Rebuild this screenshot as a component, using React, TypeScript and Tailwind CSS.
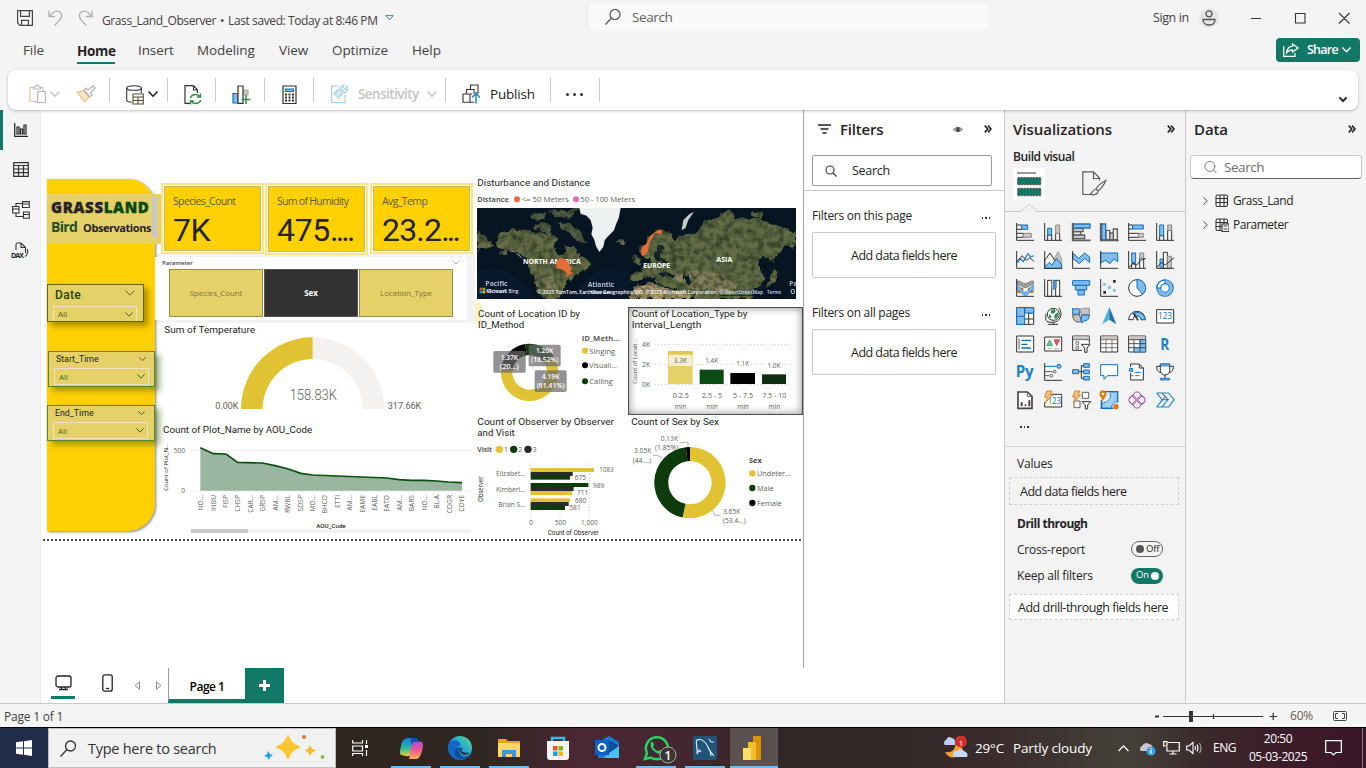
import React from "react";
import { Search } from "lucide-react";

const SANS = "font-['Open_Sans','Noto_Sans',sans-serif]";
const K = "#323130", B = "#83bdec", L = "#0f6cbd", G = "#c8c6c4", O = "#d67a1c";

type PProps = { d: string; s?: string; f?: string; w?: number };
const P = ({ d, s = K, f = "none", w = 3 }: PProps) => <path d={d} stroke={s} fill={f} strokeWidth={w} />;

const Chev = ({ className = "", w = 1.3 }: { className?: string; w?: number }) => (
  <svg className={`shrink-0 overflow-visible ${className}`} viewBox="0 0 10 6" fill="none" stroke="currentColor" strokeWidth={w}>
    <path d="M0.500 0.500L5 5.200 9.500 0.500" vectorEffect="non-scaling-stroke" />
  </svg>
);

const Collapse = () => (
  <svg className="h-[8px] w-[8px] shrink-0" viewBox="0 0 8 8" fill="none" stroke="#222" strokeWidth="1.600">
    <path d="M.8 .6L3.800 4 .8 7.400M4 .6L7 4 4 7.400" />
  </svg>
);

type TProps = {
  x: number; y: number; w?: number; size: number; c?: string; b?: boolean; a?: "start" | "middle" | "end";
  font?: string; rot?: boolean; weight?: number; children: React.ReactNode;
};
const T = ({ x, y, w, size, c = "#605e5c", b, a = "start", font = "Open Sans", rot, weight, children }: TProps) => (
  <text
    x={x} y={y} fontSize={size} fill={c} fontWeight={weight ?? (b ? 700 : 400)} textAnchor={a} fontFamily={`${font}, sans-serif`}
    textLength={w} lengthAdjust="spacingAndGlyphs" dominantBaseline="central"
    transform={rot ? `rotate(-90 ${x} ${y})` : undefined}
  >
    {children}
  </text>
);

const axis = "M2 0V52H54";

const vizIcons: React.ReactNode[] = [
  <><P d="M2 6H17V19H2M2 31H22V43H2" /><P d="M22 31H46V43H22Z" s="#8a8886" f={G} /><P d="M17 6H35V19H17Z" s={L} f={B} /><P d={axis} /></>,
  <><P d="M11 52V36H23V52M35 52V31H47V52" /><P d="M35 6H47V31H35Z" s="#8a8886" f={G} /><P d="M11 16H23V36H11Z" s={L} f={B} /><P d={axis} /></>,
  <><P d="M4 26H26V36H4Z" s="#605e5c" f="#eee" w={4} /><P d="M4 15H33V26H4Z" s="#605e5c" f={G} w={4} /><P d="M4 36H38V47H4Z" s="#605e5c" f={G} w={4} /><P d="M4 3H54V15H4Z" s="#2474b5" f={B} w={4} /><P d="M2 0V52H56" w={5} s="#605e5c" /></>,
  <><P d="M18 22H29V50H18ZM40 18H52V50H40Z" s="#605e5c" f="#eee" w={4} /><P d="M29 30H40V50H29Z" s="#605e5c" f={G} w={4} /><P d="M5 3H17V51H5Z" s="#2474b5" f={B} w={4} /><P d="M2 0V52H56" w={5} s="#605e5c" /></>,
  <><P d="M2 6H14V18H2M2 31H32V43H2" /><P d="M32 31H46V43H32Z" s="#8a8886" f={G} /><P d="M14 6H46V18H14Z" s={L} f={B} /><P d={axis} /></>,
  <><P d="M11 52V38H23V52M35 52V22H47V52" /><P d="M35 6H47V22H35Z" s="#8a8886" f={G} /><P d="M11 6H23V38H11Z" s={L} f={B} /><P d={axis} /></>,
  <><P d="M2 36L14 24 22 32 36 8 44 18 54 14" s="#2b88c8" w={4} /><P d="M2 32L18 14 32 28 42 20 54 32" /><P d={axis} /></>,
  <><P d="M26 32L42 2 53 24V52H26Z" s="#a19f9d" f={G} /><P d="M2 28L18 6 36 34 20 52H2Z" f="#f3f3f3" /><P d="M2 48L16 34 24 42 38 22 53 42V52H2Z" s={L} f={B} /><P d={axis} /></>,
  <><P d="M2 6L20 22 38 6 53 18V34L38 22 22 38 2 22Z" f={B} s={L} /><P d={axis} /></>,
  <><P d="M2 6H53V32L42 24 30 38 16 28 2 36Z" f={B} s={L} /><P d={axis} /></>,
  <><P d="M11 52V38H23V52M35 52V22H47V52" f="#fff" /><P d="M35 6H47V22H35Z" s="#8a8886" f={G} /><P d="M11 6H23V34H11Z" s={L} f={B} /><P d="M2 50L14 38 26 42 38 28 54 22" /><P d={axis} /></>,
  <><P d="M12 24H22V52H12Z" s={L} f={B} /><P d="M22 4H34V52H22Z" f="#fff" /><P d="M34 16H46V52H34Z" s="#8a8886" f={G} /><P d="M2 50L16 34 28 42 40 32 54 20" /><P d={axis} /></>,
  <><P d="M4 38H16V30H22M36 30H42V38H53" s={O} w={8} /><P d="M2 6C14 4 20 14 28 14S42 4 52 6V16C42 16 36 26 28 26S14 16 2 16Z" f="#a19f9d" s="#605e5c" w={2} /><P d="M2 20C16 20 18 40 28 40S40 20 52 20V32C42 32 40 49 28 49S14 32 2 32Z" f={B} s={L} w={2} /><P d="M2 0V52H54" /></>,
  <><P d="M11 4H23V52H11ZM35 4H47V52H35Z" f="#fff" /><P d="M23 4H29V32H23" s="#8a8886" f={G} /><P d="M30 4H36V28H30Z" s={L} f={B} /><P d={axis} /></>,
  <><P d="M2 5H53V19H2Z" s={L} f={B} /><P d="M10 19H44V33H10Z" s={L} f={B} /><P d="M18 33H37V48H18Z" s={L} f={B} /></>,
  <><P d="M39 3H47V11H39ZM10 36H18V44H10Z" s="none" f={K} /><path d="M9 12h8v8H9zM24 21h9v9h-9zM39 30h8v8h-8z" fill={B} /><P d={axis} /></>,
  <><circle cx="27" cy="27" r="25" fill="#fff" stroke={K} strokeWidth="3" /><P d="M27 2A25 25 0 0 1 44 46L27 27Z" s={L} f={B} /></>,
  <><circle cx="27" cy="27" r="19" fill="none" stroke={L} strokeWidth="15" /><circle cx="27" cy="27" r="19" fill="none" stroke={B} strokeWidth="10" /><P d="M3 27A24 24 0 0 1 27 3V14A13 13 0 0 0 14 27Z" f="#fff" s={L} /></>,
  <><P d="M2 2H53V52H2ZM26 36H53M38 36V18H53M38 36V52" f="#fff" /><P d="M2 2H26V52H2ZM2 28H26M26 2H53V18H26Z" s={L} f={B} /></>,
  <><circle cx="28" cy="22" r="18" fill="#fff" stroke={K} strokeWidth="3" /><path d="M22 8l10-2 3 8-7 6-8-2zM14 22l8 4-1 8-5-2zM34 20l9-4-1 12-7 8-5-6z" fill="#2e8b57" /><P d="M44 2C58 18 50 46 26 46S4 38 6 20M28 46V52M12 52H42" /></>,
  <><path d="M2 4C10 10 14 2 22 6V22H2Z" fill={B} stroke={L} strokeWidth="3" /><P d="M22 6C32 6 36 2 52 4V24L28 22Z" s="#8a8886" f={G} /><P d="M2 24L22 22 28 42 18 46C8 44 2 36 2 24Z" s="#605e5c" f={G} /><P d="M28 24H52C52 38 44 42 36 42L28 48Z" s={L} f={B} /></>,
  <><path d="M28 0L6 52 28 38Z" fill="#4fb3e0" /><path d="M28 0L49 52 28 38Z" fill="#1f6fae" /></>,
  <><P d="M2 38A25 25 0 0 1 52 38H39A12 12 0 0 0 15 38Z" f="#fff" /><P d="M14 20A25 25 0 0 1 52 38H39A12 12 0 0 0 22 28Z" s={L} f={B} /><P d="M30 40L18 20" w={5} /></>,
  <><P d="M2 8H53V48H2Z" f="#fff" /><T x={27} y={28} size={26} w={42} a="middle" c={L}>123</T></>,
  <><P d="M2 3H53V51H2Z" f="#fff" /><P d="M9 10V44" s="#605e5c" /><P d="M16 16H45M16 28H34M16 39H45" s={L} w={4} /></>,
  <><P d="M2 6H53V48H2Z" f="#fff" /><P d="M8 32L17 14 26 32Z" f="#6cc08b" s="#2e8b57" w={2} /><P d="M30 14H47L38 32Z" f="#e8505f" s="#c43b46" w={2} /><P d="M10 41H24M30 41H46" s="#8a8886" w={2} /></>,
  <><P d="M52 26V3H2V46H30" f="#fff" /><path d="M3 4h49v10H3z" fill={G} /><P d="M2 14H52M12 20H20V28H12ZM12 34H20V42H12Z" w={2} /><P d="M28 28H54L45 39V52H38V39Z" f="#fff" /></>,
  <><P d="M2 3H53V51H2Z" f="#fff" /><path d="M3 4h49v9H3z" fill={G} /><P d="M2 14H53M2 26H53M2 38H53M18 14V51M36 14V51" w={2.5} s="#605e5c" /></>,
  <><P d="M2 3H53V51H2Z" f="#fff" /><path d="M3 4h49v9H3z" fill={G} /><path d="M36 14h16v37H20V38h16z" fill={B} /><P d="M2 14H53M2 26H53M2 38H53M18 14V51M36 14V51" w={2.5} /><P d="M36 14H53V51H18V38H36Z" w={2} s={L} /></>,
  <T x={26} y={27} size={47} a="middle" b c="#2080c4" w={27}>R</T>,
  <T x={26} y={24} size={47} a="middle" b c="#2080c4" w={54}>Py</T>,
  <><P d="M2 10H40" s={L} /><circle cx="45" cy="10" r="6" fill={B} stroke={L} strokeWidth="3" /><P d="M2 26H26M2 38H16" s="#605e5c" /><circle cx="32" cy="26" r="4" fill="none" stroke="#605e5c" strokeWidth="3" /><circle cx="22" cy="38" r="4" fill="none" stroke="#605e5c" strokeWidth="3" /><P d={axis} /></>,
  <><P d="M18 26H36M28 8V46H36M28 8H36" /><P d="M2 20H20V32H2ZM35 2H52V13H35ZM35 21H52V32H35ZM35 40H52V51H35Z" s={L} f={B} /></>,
  <P d="M2 5H53V38H22L12 49V38H2Z" s={L} f="#fff" />,
  <><P d="M8 12V3H34L46 15V51H8V30M34 3V15H46" f="#fff" /><P d="M5 16H14V25H5Z" s={L} f={B} /><P d="M20 28H38M10 38H16M22 38H34" s={L} /></>,
  <><P d="M13 10H2C2 24 8 28 16 29M41 10H52C52 24 46 28 38 29M27 36V46" /><P d="M13 3H41V22C41 30 35 36 27 36S13 30 13 22Z" f="#fff" /><P d="M13 3H41V9H13ZM13 46H41V51H13Z" s={L} f={B} w={2.5} /></>,
  <><P d="M6 3H34L48 16V52H6Z" w={5} f="#fff" s="#484644" /><P d="M34 3V16H48" s="#605e5c" /><path d="M14 34h6v12h-6zM26 40h5v6h-5zM37 28h6v18h-6z" fill="#484644" /></>,
  <><P d="M22 10H53V48H2V34" f="#fff" /><T x={31} y={29} size={25} w={40} a="middle" c={L}>123</T><P d="M8 0H24L18 12H26L4 36 10 18H2Z" s={O} f="#f3c27a" w={2.5} /></>,
  <><P d="M31 4H50V22H31ZM6 30H24V50H6Z" f="#fff" s="#605e5c" /><P d="M30 32H56L47 42V54H40V42Z" f="#fff" /><P d="M8 0H24L18 12H26L4 36 10 18H2Z" s={O} f="#f3c27a" w={2.5} /></>,
  <><P d="M4 2H53V34M40 52H4V26" f="#d7ebfa" s={L} w={4} /><P d="M52 3H34C26 8 36 18 28 24S22 34 6 36V51H36C32 44 44 30 52 34Z" f="#9fd0f2" s={L} w={2.5} /><path d="M9-2C0-2-3 7-1 13c2 6 6 8 10 18 4-10 8-12 10-18C21 7 18-2 9-2" fill={O} /><circle cx="9" cy="9" r="4" fill="#fff" /><circle cx="48" cy="47" r="8" fill={O} /></>,
  <P d="M22 3H32L39 12 27 25 15 12ZM3 22V32L12 39 25 27 12 15ZM51 22V32L42 39 29 27 42 15ZM22 51H32L39 42 27 29 15 42ZM15 12L3 22M39 12L51 22M15 42L3 32M39 42L51 32" s="#9b4fb0" w={3} />,
  <><P d="M2 6H38L54 26 38 48H18L36 26 18 26M2 6L18 26M18 6L36 26M2 48L18 28M2 48H20" s="#1f86d6" f="none" w={3.5} /><P d="M10 38L28 16" s="#1f86d6" /></>,
];

const donut = (cx: number, cy: number, R: number, r: number, a0: number, a1: number) => {
  const p = (rad: number, a: number) => {
    const t = ((a - 90) * Math.PI) / 180;
    return `${(cx + rad * Math.cos(t)).toFixed(1)} ${(cy + rad * Math.sin(t)).toFixed(1)}`;
  };
  const big = a1 - a0 > 180 ? 1 : 0;
  return `M${p(R, a0)}A${R} ${R} 0 ${big} 1 ${p(R, a1)}L${p(r, a1)}A${r} ${r} 0 ${big} 0 ${p(r, a0)}Z`;
};

const GOLD = "#e1c233", GREEN = "#0d3b0b";
const DIN = "Roboto";
const INK = "#252423";

function MapVisual() {
  return (
    <>
      <svg className="absolute left-[434px] top-[65px] h-[32px] w-[320px]" viewBox="15 0 960 96">
        <T x={22} y={23} size={29} w={338} font={DIN} c={INK}>Disturbance and Distance</T>
        <T x={22} y={73} size={21} w={94} b>Distance</T>
        <circle cx="141" cy="73" r="9" fill="#e66c37" /><T x={155} y={73} size={21} w={142}>{"<= 50 Meters"}</T>
        <circle cx="318" cy="73" r="9" fill="#e668b6" /><T x={331} y={73} size={21} w={164}>50 - 100 Meters</T>
      </svg>
      <svg className="absolute left-[436px] top-[98px] h-[91px] w-[319px]" viewBox="21 99 957 273" preserveAspectRatio="none">
        <defs>
          <filter id="terrain" x="0" y="0" width="100%" height="100%" colorInterpolationFilters="sRGB">
            <feTurbulence type="fractalNoise" baseFrequency="0.05" numOctaves="4" seed="5" result="n" />
            <feDisplacementMap in="SourceGraphic" in2="n" scale="22" xChannelSelector="R" yChannelSelector="G" result="s" />
            <feColorMatrix in="n" type="matrix" values="0 0 0 0 0.16  0 0 0 0 0.21  0 0 0 0 0.13  0 2 0 0 -0.75" result="m" />
            <feComposite in="m" in2="s" operator="in" result="o" />
            <feMerge><feMergeNode in="s" /><feMergeNode in="o" /></feMerge>
          </filter>
        </defs>
        <rect x="21" y="99" width="957" height="273" fill="#061521" />
        <path d="M21 290C120 260 170 330 200 372H21ZM300 372C360 280 420 260 480 300L490 372Z" fill="#08192c" />
        <g filter="url(#terrain)">
          <path d="M21 170L50 190 70 212 50 222 30 215 21 230ZM82 185L100 168 130 162 165 166 205 178 235 172 262 190 252 212 266 238 285 240 286 212 312 214 325 235 345 250 362 268 345 288 312 300 292 318 280 345 270 372H215L198 335 186 296 172 262 150 238 120 226 88 244 100 224 80 206Z" fill="#656c46" />
          <path d="M180 120L215 112 232 128 200 138ZM190 150L222 142 250 160 232 172 205 168ZM235 112L275 102 300 110 290 130 258 128ZM262 140L300 145 335 175 345 205 325 200 300 175 270 160ZM310 99H330L300 125 285 122Z" fill="#525c46" />
          <path d="M438 198L462 196 466 206 448 212Z" fill="#7c7c65" />
          <path d="M513 242L515 218 536 188 562 166 604 178 612 196 650 178 682 172 700 140 736 130 775 103 795 132 850 128 920 150 978 172V215L942 214 925 238 905 262 880 240 862 262 880 290 878 325 850 345 845 372H640L620 340 560 325 545 305 520 312 482 318 480 298 512 290 520 272 545 264 540 244 526 250ZM494 240L508 250 510 268 492 268ZM845 110L880 118 870 132 848 124ZM905 300L912 280 922 296 912 325 890 338Z" fill="#616c46" />
          <path d="M476 372L494 338 540 322 600 342 640 348 690 372Z" fill="#b39a70" />
          <path d="M600 300L690 282 760 300 800 330 790 355 700 350 640 330ZM215 310L250 300 260 345 240 360Z" fill="#958c66" opacity=".75" />
          <path d="M550 235L575 208 585 215 570 246 600 262 560 260Z M560 290L620 296 610 306 572 304ZM640 300L656 298 664 330 650 330Z" fill="#08192a" />
        </g>
        <path d="M328 99H452L446 130 438 148 432 166 412 186 404 196 400 215 388 231 378 214 373 194 364 178 368 158 362 136 350 122 332 116Z" fill="#edf0f0" />
        <path d="M110 226L135 232 160 254 148 240 130 228ZM635 165L640 135 658 118 672 110 655 135 646 160Z" fill="#c6cdca" />
        <path d="M513 240L515 218 530 205 540 182 565 165 577 166 574 178 556 174 546 190 538 205 533 230 522 242Z" fill="#e66c37" />
        <T x={159} y={260} size={21} w={173} b c="#fff">NORTH AMERICA</T>
        <T x={520} y={270} size={20} w={80} b c="#fff">EUROPE</T>
        <T x={739} y={253} size={20} w={48} b c="#fff">ASIA</T>
        <path d="M258 262L272 249 290 254 297 268 304 277 302 290 311 294 298 300 288 306 290 294 278 284 260 280Z" fill="#e66c37" />
        <g opacity=".85">
          <T x={46} y={326} size={19} w={67} b c="#cbd6e6">Pacific</T>
          <T x={50} y={349} size={18} w={60} b c="#cbd6e6">Ocean</T>
          <T x={353} y={329} size={19} w={80} b c="#cbd6e6">Atlantic</T>
          <T x={362} y={351} size={18} w={60} b c="#cbd6e6">Ocean</T>
          <T x={958} y={326} size={19} b c="#cbd6e6">Pa</T>
          <T x={961} y={348} size={19} b c="#cbd6e6">O</T>
        </g>
        <path d="M29 338h8v8h-8z" fill="#f25022" /><path d="M38 338h8v8h-8z" fill="#7fba00" /><path d="M29 347h8v8h-8z" fill="#00a4ef" /><path d="M38 347h8v8h-8z" fill="#ffb900" />
        <T x={49} y={348} size={16} w={96} c="#fff">Microsoft Bing</T>
        <T x={202} y={351} size={15} w={542} weight={600} c="#fff">© 2025 TomTom, Earthstar Geographics SIO, © 2025 Microsoft Corporation,</T>
        <g textDecoration="underline"><T x={748} y={351} size={15} w={131} weight={600} c="#c5dcff">© OpenStreetMap</T><T x={891} y={351} size={15} w={42} weight={600} c="#c5dcff">Terms</T></g>
      </svg>
    </>
  );
}

function MethodDonut() {
  return (
    <svg className="absolute left-[434px] top-[194px] h-[112px] w-[150px]" viewBox="15 12 450 336">
      <T x={24} y={39} size={29} w={306} font={DIN} c={INK}>Count of Location ID by</T>
      <T x={24} y={72} size={29} w={139} font={DIN} c={INK}>ID_Method</T>
      <path d={donut(179, 217, 86, 52, -9, 58)} fill={GREEN} />
      <path d={donut(179, 217, 86, 52, 58, 279)} fill={GOLD} />
      <path d={donut(179, 217, 86, 52, 279, 351)} fill="#0b0b0b" />
      {[[70, 153, 97], [176, 134, 96], [194, 211, 96]].map(([x, y, w]) => (
        <rect key={x} x={x} y={y} width={w} height="65" rx="5" fill="#6a6a6a" fillOpacity=".72" />
      ))}
      <T x={118} y={173} size={20} w={52} a="middle" weight={600} c="#fff">1.37K</T><T x={118} y={200} size={20} w={57} a="middle" weight={600} c="#fff">(20...)</T>
      <T x={224} y={152} size={20} w={52} a="middle" weight={600} c="#fff">1.26K</T><T x={224} y={179} size={20} w={82} a="middle" weight={600} c="#fff">(18.52%)</T>
      <T x={242} y={230} size={20} w={53} a="middle" weight={600} c="#fff">4.19K</T><T x={242} y={257} size={20} w={84} a="middle" weight={600} c="#fff">(61.41%)</T>
      <T x={335} y={114} size={22} w={115} b>ID_Meth...</T>
      {[["Singing", 152, GOLD, 78], ["Visuali...", 196, "#000", 83], ["Calling", 244, GREEN, 70]].map(([n, y, c, w]) => (
        <g key={n as string}><circle cx="345" cy={y} r="9" fill={c as string} /><T x={358} y={y as number} size={23} w={w as number}>{n}</T></g>
      ))}
    </svg>
  );
}

function IntervalBars() {
  const bars: [number, number, number, string, string, string, number][] = [
    [594, 153, 74, "#e6d068", "3.3K", "0-2.5", 181], [689, 209, 72, "#0b4a12", "1.4K", "2.5 - 5", 181],
    [781, 219, 74, "#000", "1.1K", "5 - 7.5", 190], [876, 223, 72, "#0b2f10", "1.0K", "7.5 - 10", 197],
  ];
  return (
    <div className="absolute left-[587px] top-[197px] h-[108px] w-[175px] border border-[#4b4b4b] bg-white shadow-[inset_0_0_9px_rgba(0,0,0,0.45)]">
      <svg className="h-[106px] w-[173px]" viewBox="477 24 519 318">
        <T x={485} y={40} size={29} w={347} font={DIN} c={INK}>Count of Location_Type by</T>
        <T x={485} y={73} size={29} w={209} font={DIN} c={INK}>Interval_Length</T>
        <path d="M555 133H968M555 193H968M555 253H968" stroke="#ccc" strokeWidth="3" strokeDasharray="3 6" />
        <T x={541} y={133} size={21} a="end">4K</T><T x={541} y={193} size={21} a="end">2K</T><T x={541} y={254} size={21} a="end">0K</T>
        <T x={495} y={184} size={18} w={134} a="middle" rot c="#484644">Count of Locati...</T>
        {bars.map(([x, y, w, c, v, n, ly]) => (
          <g key={n}>
            <rect x={x} y={y} width={w} height={252 - y} fill={c} />
            {v === "3.3K"
              ? <><rect x={x} y={y} width={w} height="11" fill="#e1c94a" /><rect x={x + 2} y="164" width={w - 4} height="34" rx="4" fill="#f5efcf" /></>
              : <rect x={x + w / 2 - 24} y={ly - 12} width="48" height="24" fill="#fff" />}
            <T x={x + w / 2} y={ly} size={20} w={39} a="middle">{v}</T>
            <T x={x + w / 2 + 1} y={287} size={20} w={[48, 60, 60, 71][bars.findIndex((r) => r[5] === n)]} a="middle">{n}</T>
            <T x={x + w / 2 + 1} y={318} size={20} w={35} a="middle">min</T>
          </g>
        ))}
      </svg>
    </div>
  );
}

function ObserverBars() {
  const D = "#2b2b2b";
  const rows: [number, number, string][] = [
    [504, 372, GOLD], [516, 308, D], [527, 300, GREEN], [549, 355, GREEN], [561, 311, D], [573, 306, GOLD],
    [595, 300, GOLD], [606, 296, D], [618, 285, GREEN],
  ];
  return (
    <svg className="absolute left-[434px] top-[306px] h-[122px] w-[150px]" viewBox="15 348 450 366">
      <T x={22} y={364} size={29} w={410} font={DIN} c={INK}>Count of Observer by Observer</T>
      <T x={22} y={397} size={29} w={112} font={DIN} c={INK}>and Visit</T>
      <T x={22} y={449} size={20} w={44} b>Visit</T>
      {[[88, GOLD, 1], [131, GREEN, 2], [174, D, 3]].map(([x, c, n]) => (
        <g key={n}><circle cx={x} cy="448" r="11" fill={c as string} /><T x={(x as number) + 14} y={449} size={20}>{n}</T></g>
      ))}
      <path d="M182 486V650M270 486V650M358 486V650" stroke="#ccc" strokeWidth="3" strokeDasharray="3 6" />
      {rows.map(([y, x, c]) => <rect key={y} x="182" y={y} width={x - 182} height="12" fill={c} />)}
      <T x={166} y={521} size={20} w={88} a="end">Elizabet...</T><T x={166} y={569} size={20} w={88} a="end">Kimberl...</T><T x={166} y={614} size={20} w={81} a="end">Brian S...</T>
      <T x={388} y={508} size={21} w={43}>1083</T><T x={314} y={532} size={21} w={34}>675</T><T x={369} y={556} size={21} w={34}>989</T>
      <T x={321} y={577} size={21} w={34}>711</T><T x={315} y={602} size={21} w={34}>680</T><T x={298} y={623} size={21} w={34}>581</T>
      <T x={183} y={668} size={21} a="middle">0</T><T x={271} y={668} size={21} w={34} a="middle">500</T><T x={358} y={668} size={21} w={50} a="middle">1,000</T>
      <T x={233} y={699} size={19} w={153} font={DIN} c="#252423">Count of Observer</T>
      <T x={30} y={567} size={19} w={76} a="middle" rot c="#252423">Observer</T>
    </svg>
  );
}

function SexDonut() {
  return (
    <svg className="absolute left-[587px] top-[306px] h-[122px] w-[175px]" viewBox="474 348 525 366">
      <T x={484} y={364} size={29} w={263} font={DIN} c={INK}>Count of Sex by Sex</T>
      <path d="M630 427H654V440M549 466H562L578 474M727 632L735 646H752" stroke="#b3b0ad" strokeWidth="3" fill="none" />
      <path d={donut(660, 548, 107, 65, 0, 192)} fill={GOLD} />
      <path d={donut(660, 548, 107, 65, 192, 353.3)} fill={GREEN} />
      <path d={donut(660, 548, 107, 65, 353.3, 360)} fill="#000" />
      <T x={598} y={416} size={21} w={52} a="middle">0.13K</T><T x={590} y={442} size={21} w={70} a="middle">(1.85%)</T>
      <T x={518} y={452} size={21} w={52} a="middle">3.05K</T><T x={516} y={482} size={21} w={56} a="middle">(44....)</T>
      <T x={785} y={635} size={21} w={52} a="middle">3.65K</T><T x={793} y={662} size={21} w={68} a="middle">(53.4...)</T>
      <T x={837} y={481} size={21} w={38} b c="#484644">Sex</T>
      {[["Undeter...", 520, GOLD, 101], ["Male", 564, GREEN, 50], ["Female", 609, "#000", 75]].map(([n, y, c, w]) => (
        <g key={n as string}><circle cx="847" cy={y} r="9.5" fill={c as string} /><T x={861} y={y as number} size={22} w={w as number}>{n}</T></g>
      ))}
    </svg>
  );
}

function Gauge() {
  return (
    <svg className="absolute left-[119px] top-[213px] h-[92px] w-[310px]" viewBox="480 9 930 276">
      <T x={493} y={29} size={29} w={272} font={DIN} c={INK}>Sum of Temperature</T>
      <path d={donut(938, 267, 215, 150, 0, 90)} fill="#f3f2f1" /><path d={donut(938, 267, 215, 150, -90, 0)} fill={GOLD} />
      <T x={869} y={224} size={46} w={142} font={DIN} weight={300} c="#605e5c">158.83K</T>
      <T x={646} y={257} size={27} w={69} font={DIN}>0.00K</T><T x={1163} y={257} size={27} w={101} font={DIN}>317.66K</T>
    </svg>
  );
}

const codes = ["NO...", "INBU", "FISP", "CHSP", "CAR...", "GRSP", "AM...", "RWBL", "SOSP", "MO...", "BHCO", "ETTI", "AM...", "EAME", "EABL", "EATO", "AM...", "BARS", "NO...", "BL.A", "COGR", "COYE"];

function AreaChart() {
  const line = "M601 383L640 401 678 402 713 427 787 429 825 437 865 447 903 460 938 465 1012 468 1085 471 1160 474 1197 479 1235 481 1272 481 1310 483 1345 486 1386 488";
  return (
    <svg className="absolute left-[119px] top-[312px] h-[114px] w-[312px]" viewBox="480 306 936 342">
      <T x={489} y={329} size={29} w={448} font={DIN} c={INK}>Count of Plot_Name by AOU_Code</T>
      <path d="M573 391H1413M573 513H1413" stroke="#eeeeee" strokeWidth="3" />
      <T x={555} y={392} size={20} w={34} a="end">500</T><T x={555} y={512} size={20} a="end">0</T>
      <T x={498} y={441} size={18} w={143} a="middle" rot c="#252423">Count of Plot_N...</T>
      <path d={`${line}V512H601Z`} fill="#9bb6a0" /><path d={line} fill="none" stroke="#09500f" strokeWidth="5" />
      {codes.map((c, i) => <T key={i} x={602 + i * 37.25} y={525} size={20} a="end" rot>{c}</T>)}
      <T x={993} y={615} size={18} w={88} a="middle" font={DIN} weight={500} c="#252423">AOU_Code</T>
      <rect x="573" y="627" width="840" height="12" fill="#f3f3f3" /><rect x="573" y="627" width="171" height="12" fill="#c8c8c8" />
    </svg>
  );
}

function Slicer({ title, className, titleClass, boxClass, chevClass }: { title: string; className: string; titleClass: string; boxClass: string; chevClass: string }) {
  return (
    <div className={`absolute flex flex-col bg-[#e6d068] ${className}`}>
      <div className={`flex items-center justify-between font-['Roboto'] ${titleClass}`}>
        <span>{title}</span><Chev className={`text-[#4e6231] ${chevClass}`} w={1} />
      </div>
      <div className={`flex items-center justify-between border border-[#eae3c4] pl-[4px] text-[8px] text-[#3e6a26] ${boxClass}`}>
        <span>All</span><Chev className="mr-[3px] w-[8px]" w={1} />
      </div>
    </div>
  );
}

function Card({ label, value, dots = "", className, labelClass, valueClass }: { label: string; value: string; dots?: string; className: string; labelClass: string; valueClass: string }) {
  return (
    <div className={`absolute top-[73px] border-2 border-[#ffe680] bg-white p-px ${className}`}>
      <div className="flex h-full flex-col overflow-hidden border border-[#cdb867] bg-[#ffd103] pl-[8px] whitespace-nowrap">
        <div className={`mt-[7px] text-[10.5px] leading-[15px] text-[#605e3c] ${labelClass}`}>{label}</div>
        <div className={`mt-[3px] font-['Roboto'] text-[32px] leading-[36px] text-[#252423] ${valueClass}`}>{value}<span className="tracking-[-2.800px]">{dots}</span></div>
      </div>
    </div>
  );
}

function ReportCanvas() {
  return (
    <div className="relative h-[558px] w-[762px] shrink-0 overflow-hidden bg-white">
      <div className="absolute left-[114px] top-[144px] h-[69px] w-[320px] bg-[#f3f3f3]" />
      <div className="absolute left-[434px] top-[192px] h-[22px] w-[6px] bg-[#fff3c2]" />
      <div className="absolute left-[6px] top-[69px] h-[352px] w-[108px] rounded-r-[27px] bg-[#ffd103] shadow-[1px_1px_3px_rgba(0,0,0,0.5)]" />
      <div className="absolute left-[6px] top-[84px] flex h-[50px] w-[114px] bg-[#e6d068]">
        <div className="flex w-[105px] flex-col pl-[4px] pt-[3px] font-bold whitespace-nowrap text-[#252423]">
          <div className="text-[15px] leading-[20px] font-extrabold tracking-[0.650px] [-webkit-text-stroke:0.4px_currentColor]">GRASS<span className="text-[#07490f]">LAND</span></div>
          <div className="flex items-baseline gap-[6px] leading-[20px]"><span className="text-[14px] tracking-[-0.700px] text-[#1d4f2b]">Bird</span><span className="text-[11px] tracking-[-0.450px]">Observations</span></div>
        </div>
        <div className="mt-[3px] h-[40px] w-[5px] bg-[#c8c8c8]" />
      </div>
      <Card label="Species_Count" value="7K" className="left-[120px] h-[71px] w-[103px]" labelClass="tracking-[-0.650px]" valueClass="tracking-[-0.500px]" />
      <Card label="Sum of Humidity" value="475" dots="...." className="left-[224px] h-[72px] w-[103px]" labelClass="tracking-[-0.700px]" valueClass="tracking-[-0.300px]" />
      <Card label="Avg_Temp" value="23.2" dots="..." className="left-[329px] h-[71px] w-[103px]" labelClass="tracking-[-0.600px]" valueClass="tracking-[-0.800px]" />
      <div className="absolute left-[114px] top-[147px] h-[63px] w-[312px] bg-white">
        <div className="flex h-[12px] items-center justify-between pl-[7px] pr-[8px] text-[6px] font-semibold text-[#444]"><span>Parameter</span><Chev className="w-[6px] text-[#999]" w={0.9} /></div>
        <div className="ml-[14px] grid h-[48px] w-[284px] grid-cols-3 gap-px text-[8px] tracking-[-0.100px] text-[#7d7447]">
          <div className="flex items-center justify-center border border-[#9a8c4b] bg-[#e6d068]">Species_Count</div>
          <div className="flex items-center justify-center border border-[#555] bg-[#323232] font-bold text-white">Sex</div>
          <div className="flex items-center justify-center border border-[#9a8c4b] bg-[#e6d068]">Location_Type</div>
        </div>
      </div>
      <Slicer title="Date" className="left-[6px] top-[174px] h-[38px] w-[97px] border border-[#6b601f] pl-[5px] pr-[6px] shadow-[4px_4px_6px_rgba(110,95,0,0.6)]" chevClass="w-[10px] -mt-[3px] mr-[2px]" titleClass="h-[20px] pl-[2px] text-[12px] font-medium tracking-[0.300px] text-[#1b4a10]" boxClass="mt-[2px] h-[15px] w-[84px] border-b-0" />
      <Slicer title="Start_Time" className="left-[7px] top-[241px] h-[36px] w-[107px] border border-[#5f8426] pl-[5px] pr-[5px] shadow-[5px_4px_6px_rgba(70,100,20,0.5)]" chevClass="w-[7px] mr-[2px]" titleClass="h-[15px] pl-[2px] pr-px text-[8.8px] text-[#252423]" boxClass="mt-px h-[17px] w-[95px]" />
      <Slicer title="End_Time" className="left-[6px] top-[295px] h-[36px] w-[108px] border border-[#5f8426] pl-[5px] pr-[6px] shadow-[5px_4px_6px_rgba(70,100,20,0.5)]" chevClass="w-[7px] mr-[2px]" titleClass="h-[15px] pl-[2px] pr-px text-[8.8px] text-[#252423]" boxClass="mt-px h-[17px] w-[95px]" />
      <MapVisual /><Gauge /><AreaChart /><MethodDonut /><IntervalBars /><ObserverBars /><SexDonut />
      <svg className="absolute left-[2px] top-[429px] h-[2px] w-[760px]"><path d="M0 1H760" stroke="#484644" strokeWidth="2" strokeDasharray="2 2" /></svg>
    </div>
  );
}

function TitleBar() {
  return (
    <div className="flex h-[35px] items-center whitespace-nowrap text-[#424242]">
      <svg className="ml-[17px] h-[16px] w-[16px] shrink-0" viewBox="0 0 16 16" fill="none" stroke="#444" strokeWidth="1.200"><path d="M.6.6H15.4V15.4H3L.6 13ZM3.6.6V6.4H12.4V.6M4.6 15.4V10.4H11.4V15.4" /></svg>
      <svg className="ml-[15px] h-[16px] w-[15px] shrink-0" viewBox="0 0 15 16" fill="none" stroke="#b0b0b0" strokeWidth="1.300"><path d="M1 .5V6.5H7M1 6.5L5 2.5C8 0 13 1 13.6 5C14 8 12 10 6.5 15.5" /></svg>
      <svg className="ml-[15px] h-[16px] w-[15px] shrink-0" viewBox="0 0 15 16" fill="none" stroke="#b0b0b0" strokeWidth="1.300"><path d="M14 .5V6.5H8M14 6.5L10 2.5C7 0 2 1 1.400 5C1 8 3 10 8.500 15.500" /></svg>
      <div className="ml-[9px] mt-[7px] flex w-[276px] shrink-0 gap-[4px] text-[12px] tracking-[-0.400px]"><span>Grass_Land_Observer</span><span>•</span><span>Last saved: Today at 8:46 PM</span></div>
      <svg className="ml-[7px] h-[6px] w-[9px] shrink-0" viewBox="0 0 9 6" fill="none" stroke="#4c7f9b"><path d="M.8.6H8.2L4.5 5Z" /></svg>
      <div className="ml-[193px] -mt-[1px] flex h-[26px] w-[401px] shrink-0 items-center rounded border-l border-[#e6e6e6] bg-[#fafafa] pl-[17px] text-[13.500px] tracking-[-0.400px] text-[#616161]">
        <svg className="mr-[11px] h-[16px] w-[16px]" viewBox="0 0 16 16" fill="none" stroke="#555" strokeWidth="1.200"><circle cx="10" cy="5.500" r="5" /><path d="M6.400 9L.5 15.500" /></svg>Search
      </div>
      <div className="ml-[165px] w-[46px] shrink-0 pt-px text-[12.500px] tracking-[-0.400px]">Sign in</div>
      <div className="flex h-[20px] w-[20px] shrink-0 items-center justify-center rounded-full bg-[#e5e5e5]"><svg className="h-[16px] w-[14px]" viewBox="0 0 14 16" fill="none" stroke="#555" strokeWidth="1.300"><circle cx="7" cy="3.800" r="3" /><path d="M1 9.500H13C13 13 10.500 15 7 15S1 13 1 9.500Z" /></svg></div>
      <svg className="ml-[32px] h-[12px] w-[100px] shrink-0" viewBox="0 0 100 12" fill="none" stroke="#333" strokeWidth="1.100"><path d="M0 6.500H10M44.500 1.500H54V11H44.500ZM88 1L98.500 11.500M98.500 1L88 11.500" /></svg>
    </div>
  );
}

function Menu() {
  return (
    <div className="flex h-[35px] items-center whitespace-nowrap text-[13.500px] tracking-[-0.100px] text-[#424242]">
      <div className="ml-[23px] w-[54px] -mt-[5px]">File</div>
      <div className="mr-[23px] -mt-[3px] h-[26px] w-[38px] border-b-[2px] border-[#117865] pt-[3px] text-center font-bold tracking-[-0.300px] text-[#242424]">Home</div>
      <div className="w-[59px] -mt-[5px]">Insert</div><div className="w-[82px] -mt-[5px]">Modeling</div><div className="w-[53px] -mt-[5px]">View</div>
      <div className="w-[80px] -mt-[5px]">Optimize</div><div className="w-[40px] -mt-[5px]">Help</div>
      <div className="ml-auto mr-[6px] -mt-[5px] flex h-[24px] w-[84px] items-center rounded bg-[#117865] pl-[7px] text-[12.500px] font-semibold tracking-[-0.750px] text-white">
        <svg className="mr-[8px] h-[14px] w-[16px] shrink-0" viewBox="0 0 16 14" fill="none" stroke="#fff" strokeWidth="1.200"><path d="M.7 3V13.300H12V10M9.500 1L15.200 5 9.500 9V6.800C6.500 6.800 5 8 3.500 10C4 6 6 3.400 9.500 3.200Z" /></svg>
        <span className="w-[32px] pt-px">Share</span><Chev className="ml-[3px] w-[9px]" w={1.400} />
      </div>
    </div>
  );
}

const Sep = ({ className }: { className: string }) => <div className={`h-[24px] w-px shrink-0 bg-[#c8c8c8] -mt-[8px] ${className}`} />;

function Ribbon() {
  return (
    <div className="relative z-10 mx-[8px] flex h-[40px] shrink-0 items-center rounded-lg bg-white shadow-[0_1px_3px_rgba(0,0,0,0.25)]">
      <div className="mt-[8px] flex h-[24px] flex-1 items-center">
        <svg className="ml-[21px] h-[20px] w-[17px] shrink-0" viewBox="0 0 17 20" fill="none" strokeWidth="1.100"><path d="M5 3.500H1V17.500H8M11 3.500H14V7" stroke="#edc08e" /><path d="M4.500 5H11.500V3H9.500C9.500 .5 6.500 .5 6.500 3H4.500ZM8.700 7.500H16.400V18.500H8.700Z" stroke="#b5b5b5" fill="#fff" /></svg>
        <Chev className="ml-[4px] w-[10px] text-[#c3c3c3]" />
        <svg className="ml-[16px] h-[18px] w-[20px] shrink-0" viewBox="0 0 20 18" fill="none" strokeWidth="1.200"><path d="M1 7L8 6 13 12 9 17Z" fill="#fbe3c5" stroke="#edc08e" /><path d="M8 5L10 3 12 5 17 .8 19 3 14.500 8 16 10 14 12Z" stroke="#b5b5b5" fill="#fff" /></svg>
        <Sep className="ml-[13px]" />
        <svg className="ml-[16px] mt-px h-[20px] w-[18px] shrink-0" viewBox="0 0 18 20" fill="none" stroke="#333" strokeWidth="1.100"><ellipse cx="8" cy="3" rx="7.300" ry="2.300" /><path d="M.7 3V15C.7 16.500 3 17.200 6 17.300M15.300 3V8" /><path d="M7 9H17.300V19H7ZM7 12H17.300M12 12V19M7 15.500H17.300" fill="#fff" stroke="#555036" /></svg>
        <Chev className="ml-[4px] w-[10px] text-[#222]" w={1.600} /><Sep className="ml-[9px]" />
        <svg className="ml-[16px] mt-px h-[20px] w-[18px] shrink-0" viewBox="0 0 18 20" fill="none" strokeWidth="1.200"><path d="M6 18.300H1V.7H9.500L13.500 5V8M9.500 .7V5H13.500" stroke="#333" /><path d="M6.500 13C8 8.500 14 8.500 16 12M16.500 8.500V12H13M16.800 15C15 19.500 9 19.500 7.200 16M6.500 19.500V16H10" stroke="#2f8f46" strokeWidth="1.400" /></svg>
        <Sep className="ml-[13px]" />
        <svg className="ml-[16px] mt-px h-[20px] w-[19px] shrink-0" viewBox="0 0 19 20" fill="none" strokeWidth="1.200"><path d="M1 8.500H6V18H1Z" fill={B} stroke={L} /><path d="M11 5H16V10H11Z" fill={G} stroke="#aaa" /><path d="M6 1H11V18.300H6Z" fill="#fff" stroke="#333" /><path d="M14 10V19M9.500 14.500H18.500" stroke="#2f8f46" strokeWidth="1.500" /></svg>
        <Sep className="ml-[13px]" />
        <svg className="ml-[17px] mt-px h-[20px] w-[15px] shrink-0" viewBox="0 0 15 20" fill="none" stroke="#333" strokeWidth="1.200"><path d="M1 1H14V18.500H1Z" /><path d="M3.500 4H11.500V6.500H3.500Z" stroke={L} fill={B} /><path d="M3 9.500H12M3 12.500H12M3 15.500H12" strokeWidth="2" strokeDasharray="2 1.500" /></svg>
        <Sep className="ml-[16px]" />
        <svg className="ml-[17px] h-[20px] w-[18px] shrink-0" viewBox="0 0 18 20" fill="none" stroke="#a6cfe8" strokeWidth="1.200"><path d="M8 2H.7V18.500H14V11" /><path d="M3 9.500L7.500 5 12 9.500 7.500 14ZM5 10L8 7M7 12L10 9" /><path d="M9 4L11 2 16 7 14 9ZM11.500 2.500L13.500 .5M14.500 4.500L17 2M15.500 6.500L17.500 4.500" /></svg>
        <span className="ml-[9px] w-[64px] shrink-0 text-[13.500px] font-semibold tracking-[-0.550px] text-[#c4c4c4]">Sensitivity</span><Chev className="ml-[5px] w-[10px] text-[#c3c3c3]" /><Sep className="ml-[8px]" />
        <svg className="ml-[16px] h-[20px] w-[19px] shrink-0" viewBox="0 0 19 20" fill="none" stroke="#333" strokeWidth="1.100"><path d="M8.500 5.500V1H16V9H13M4.500 9.500V5.500H12V10M1 10H8V18.300H1ZM8 10H10M8 18.300H12" /><path d="M14 19.500V10M10 13.500L14 9.500 18 13.500" stroke="#1f86c8" strokeWidth="1.500" /></svg>
        <span className="ml-[9px] w-[46px] shrink-0 text-[13.500px] tracking-[-0.200px] text-[#242424]">Publish</span><Sep className="ml-[14px]" />
        <span className="ml-[15px] flex gap-[4px]"><i className="h-[3px] w-[3px] rounded-full bg-[#333]" /><i className="h-[3px] w-[3px] rounded-full bg-[#333]" /><i className="h-[3px] w-[3px] rounded-full bg-[#333]" /></span><Sep className="ml-[16px]" />
      </div>
      <Chev className="mr-[11px] mt-[19px] w-[8px] text-[#222]" w={2} />
    </div>
  );
}

function Rail() {
  return (
    <div className="flex w-[41px] shrink-0 flex-col border-r border-[#ececec] bg-[#f4f4f4]">
      <div className="flex h-[40px] items-center border-l-[3px] border-[#117865] pl-[11px]"><svg className="h-[14px] w-[14px]" viewBox="0 0 14 14" fill="none" stroke="#222" strokeWidth="1.200"><path d="M.7 0V13.300H14M3 4H5V11H3ZM6.500 6H8.500V11H6.500ZM10 2H12V11H10Z" /></svg></div>
      <div className="flex h-[39px] items-center pl-[13px]"><svg className="h-[15px] w-[16px]" viewBox="0 0 16 15" fill="none" stroke="#333" strokeWidth="1.200"><path d="M.7 .7H15.300V14.300H.7ZM.7 3.500H15.300M.7 7H15.300M.7 10.700H15.300M5.500 3.500V14.300M10.500 3.500V14.300" /></svg></div>
      <div className="flex h-[41px] items-center pl-[12px]"><svg className="h-[18px] w-[18px]" viewBox="0 0 18 18" fill="none" stroke="#333" strokeWidth="1.100"><path d="M.6 5.500H7V12H.6ZM.6 8H7M10.500 .6H17.300V6.500H10.500ZM10.500 3H17.300M11.500 11H17.300V17.300H11.500ZM11.500 13.500H17.300M4 5.500V2.500H10.500M4 12V15.500H11.500" /></svg></div>
      <div className="flex h-[40px] items-center pl-[11px]"><svg className="h-[20px] w-[19px]" viewBox="0 0 19 20" fill="none" stroke="#333" strokeWidth="1.100"><path d="M5 10V4.600C5 3.500 5.500 3 6.500 3H10L14.500 7.500V13M10 3V7.500H14.500M16 9C17.500 11 16.500 15 14 16.500" /><text x="0" y="17.500" fontSize="7" fontFamily="Open Sans" stroke="none" fill="#222" fontWeight="700" textLength="13">DAX</text></svg></div>
    </div>
  );
}

const Dots = () => <span className="mt-[5px] flex gap-[2px]"><i className="h-[1.500px] w-[1.500px] bg-[#333]" /><i className="h-[1.500px] w-[1.500px] bg-[#333]" /><i className="h-[1.500px] w-[1.500px] bg-[#333]" /></span>;

function Filters() {
  return (
    <div className="w-[201px] shrink-0 border-l border-[#a8a8a8] bg-white text-[12px] tracking-[-0.280px] text-[#242424]">
      <div className="flex h-[38px] items-center pl-[14px] pr-[12px]">
        <svg className="h-[10px] w-[13px]" viewBox="0 0 13 10" stroke="#222" strokeWidth="1.400"><path d="M0 1H13M2.500 5H10.500M4.500 9H8.500" /></svg>
        <span className="ml-[9px] flex-1 text-[15px] font-semibold tracking-[-0.200px]">Filters</span>
        <svg className="mr-[21px] h-[7px] w-[10px]" viewBox="0 0 10 7" fill="none" stroke="#444" strokeWidth="1"><path d="M.7 3.500Q5-.5 9.300 3.500Q5 7.500 .7 3.500" /><circle cx="5" cy="3.500" r="1.500" fill="#333" /></svg>
        <Collapse />
      </div>
      <div className="border-b border-[#c8c8c8] px-[8px] pb-[4px] pt-[7px]"><div className="flex h-[31px] w-[180px] items-center rounded-xs border border-[#999] pl-[12px] text-[12.500px]"><svg className="mr-[15px] h-[12px] w-[12px]" viewBox="0 0 12 12" fill="none" stroke="#333" strokeWidth="1.100"><circle cx="5" cy="5" r="4" /><path d="M8 8L11.500 11.500" /></svg><span className="pt-px">Search</span></div></div>
      <div className="mt-[16px] flex h-[17px] items-center justify-between pl-[8px] pr-[14px]"><span>Filters on this page</span><Dots /></div>
      <div className="ml-[8px] mt-[8px] flex h-[46px] w-[184px] items-center justify-center rounded-xs border border-[#c8c8c8] pt-[2px] text-[12.500px] tracking-[-0.550px]">Add data fields here</div>
      <div className="mt-[26px] flex h-[17px] items-center justify-between pl-[8px] pr-[14px]"><span>Filters on all pages</span><Dots /></div>
      <div className="ml-[8px] mt-[8px] flex h-[46px] w-[184px] items-center justify-center rounded-xs border border-[#c8c8c8] pt-[2px] text-[12.500px] tracking-[-0.550px]">Add data fields here</div>
    </div>
  );
}

function Visualizations() {
  return (
    <div className="w-[182px] shrink-0 border-x border-[#c8c8c8] bg-[#f3f3f3] text-[12px] tracking-[-0.200px] whitespace-nowrap text-[#242424]">
      <div className="flex h-[38px] items-center justify-between pl-[8px] pr-[10px]"><span className="text-[15px] font-semibold tracking-[-0.020px]">Visualizations</span><Collapse /></div>
      <div className="h-[19px] pl-[8px] text-[12px] leading-[17px] font-semibold tracking-[-0.400px]">Build visual</div>
      <div className="flex h-[34px] items-center gap-[37px] pl-[8px]">
        <div className="flex h-[32px] w-[32px] items-center justify-center bg-white"><svg className="h-[25px] w-[25px]" viewBox="0 0 25 25"><path d="M0 1H19" stroke="#555" strokeWidth="1.200" /><rect x=".7" y="5.700" width="23" height="7" fill="#117865" stroke="#555" strokeDasharray="2 1" strokeWidth="1.300" /><rect x=".7" y="16.500" width="23" height="7" fill="#117865" stroke="#555" strokeDasharray="2 1" strokeWidth="1.300" /></svg></div>
        <svg className="h-[25px] w-[25px] -mt-[2px]" viewBox="0 0 25 25" fill="none" stroke="#605e5c" strokeWidth="1.200"><path d="M7 23.500H.8V.8H11.500L17.500 7V9.500M11.500 .8V7.500H17.500M23.800 9.500C19 12 15 16 14 18L16 20C18 18.500 22 14 23.800 9.500ZM14 18C10.500 18 11 22 7.500 23.500C12 24.500 16 23.500 16 20Z" /></svg>
      </div>
      <svg className="-mt-px h-[13px] w-[180px]" viewBox="0 0 180 13" fill="none" stroke="#c8c8c8"><path d="M0 11.500H16L24 4 32 11.500H180" /></svg>
      <div className="ml-[6px] mt-[5px] grid w-[168px] grid-cols-6">
        {vizIcons.map((ic, i) => <div key={i} className="flex h-[28px] items-center justify-center"><svg className="h-[18px] w-[18px] overflow-visible" viewBox="0 0 54 54" fill="none">{ic}</svg></div>)}
      </div>
      <div className="flex h-[33px] items-start border-b border-[#d5d5d5] pl-[15px] pt-[7px]"><Dots /></div>
      <div className="h-[30px] pl-[12px] pt-[8px]">Values</div>
      <div className="ml-[4px] flex h-[28px] w-[170px] items-center border border-dashed border-[#d0d0d0] pl-[10px] pt-[2px] text-[12.500px] tracking-[-0.520px]">Add data fields here</div>
      <div className="h-[31px] pl-[12px] pt-[10px] font-bold tracking-[-0.500px]">Drill through</div>
      <div className="flex h-[26px] items-center justify-between pl-[12px] pr-[17px]"><span className="pt-px">Cross-report</span><span className="mr-[5px] flex h-[16px] w-[32px] items-center rounded-full border border-[#666] pl-[4px] text-[9.500px]"><i className="mr-[2px] h-[8px] w-[8px] rounded-full bg-[#555]" />Off</span></div>
      <div className="flex h-[27px] items-center justify-between pl-[12px] pr-[17px]"><span className="pt-px">Keep all filters</span><span className="mr-[5px] flex h-[16px] w-[32px] items-center rounded-full bg-[#117865] pl-[5px] text-[9.500px] text-white">On<i className="ml-[2px] h-[8px] w-[8px] rounded-full bg-white" /></span></div>
      <div className="ml-[4px] mt-[5px] flex h-[26px] w-[170px] items-center border border-dashed border-[#d0d0d0] bg-white pl-[8px] pt-[2px] text-[12.500px] tracking-[-0.480px]">Add drill-through fields here</div>
    </div>
  );
}

function DataPane() {
  return (
    <div className="w-[180px] shrink-0 bg-[#f4f4f4] text-[12px] tracking-[-0.450px] text-[#242424]">
      <div className="flex h-[38px] items-center justify-between pl-[8px] pr-[10px]"><span className="text-[15px] font-semibold tracking-[-0.100px]">Data</span><Collapse /></div>
      <div className="ml-[4px] mt-[7px] flex h-[24px] w-[172px] items-center rounded border border-[#c8c8c8] border-b-[#666] bg-white pl-[12px] text-[13.500px] text-[#707070]"><Search className="mr-[6px] w-[15px]" strokeWidth={1.500} />Search</div>
      {["Grass_Land", "Parameter"].map((n, i) => (
        <div key={n} className={i ? "flex h-[24px] items-center pl-[17px]" : "mt-[10px] flex h-[24px] items-center pl-[17px]"}>
          <svg className="mr-[7px] h-[8px] w-[5px]" viewBox="0 0 5 8" fill="none" stroke="#555"><path d="M.5 .5L4.300 4 .5 7.500" /></svg>
          <svg className="mr-[4px] h-[14px] w-[14px]" viewBox="0 0 14 14" fill="none" stroke="#333" strokeWidth="1.100"><path d="M1 2.500Q1 1 2.500 1H11Q12.500 1 12.500 2.500V11Q12.500 12.500 11 12.500H2.500Q1 12.500 1 11ZM1 4.500H12.500M1 8.500H12.500M5 1V12.500M9 1V12.500" />{i === 1 && <path d="M7 6H14V13.500H7ZM8.500 8H12.500M8.500 11H12.500" fill="#fff" />}</svg>
          {n}
        </div>
      ))}
    </div>
  );
}

function PageTabs() {
  return (
    <div className="flex h-[35px] items-stretch bg-white">
      <div className="ml-[10px] flex w-[24px] flex-col items-center border-b-[3px] border-[#117865] mb-[4px] pt-[7px]"><svg className="h-[16px] w-[17px]" viewBox="0 0 17 16" fill="none" stroke="#222" strokeWidth="1.300"><rect x="1" y="1" width="15" height="11" rx="2" /><path d="M6.500 12V14.500M10.500 12V14.500M4 14.500H13" /></svg></div>
      <svg className="ml-[27px] mt-[6px] h-[18px] w-[11px]" viewBox="0 0 11 18" fill="none" stroke="#222" strokeWidth="1.300"><rect x=".8" y=".8" width="9.400" height="16.400" rx="2" /><path d="M4 14.500H7" /></svg>
      <svg className="ml-[21px] mt-[13px] h-[9px] w-[28px]" viewBox="0 0 28 9" fill="none" stroke="#8a8886"><path d="M5.500 .8V8.200L1 4.500ZM22.500 .8V8.200L27 4.500Z" /></svg>
      <div className="ml-[6px] flex w-[77px] items-center justify-center border-b-4 border-l border-b-[#117865] border-l-[#999] pt-[6px] text-[12px] font-semibold tracking-[-0.500px]">Page 1</div>
      <div className="flex w-[39px] items-center justify-center bg-[#117865]"><svg className="h-[11px] w-[11px]" viewBox="0 0 11 11"><path d="M5.500 0V11M0 5.500H11" stroke="#fff" strokeWidth="3" /></svg></div>
    </div>
  );
}

const appIcons: React.ReactNode[] = [
  <><path d="M8 2H16L12 18Q11 21 7 20L2 19Q0 18 2 10Q3 3 8 2" fill="url(#cpA)" /><path d="M18 23H10L13 8Q14 5 18 5L23 6Q25 8 23 15Q21 22 18 23" fill="url(#cpB)" /><path d="M12 2H17Q19 2 20 6H16Q13 6 12 10Z" fill="#174ea6" /></>,
  <><circle cx="12" cy="12" r="12" fill="url(#edA)" /><path d="M2 6C6 2 14 5 12 10C8 9 6 15 10 20C12 22 15 23 17 22.500C10 26 0 21 0 12Q0 8 2 6" fill="#1566c2" /><path d="M12 12Q10 18 14 20Q18 22 22 18C19 24 11 25 8 20C5 15 8 10 12 12" fill="#0e4c9c" /><path d="M14 12Q11 18 22 16.500Q19 19.500 15 18.500Q11 16.500 12.500 11.500Z" fill="#302825" /></>,
  <><path d="M1 3H9L11 5H23V20H1Z" fill="#e6a417" /><path d="M1 7H23V21H1Z" fill="#ffd768" /><path d="M5 14H19V21H15V18H9V21H5Z" fill="#3b98e0" /></>,
  <><path d="M6 6V2H18V6" stroke="#35b9ea" strokeWidth="2.500" fill="none" /><path d="M1 5H23V21Q23 24 20 24H4Q1 24 1 21Z" fill="#f4f4f4" /><path d="M7 10h4.500v4.500H7z" fill="#e8512a" /><path d="M12.500 10H17v4.500h-4.500z" fill="#7fba00" /><path d="M7 15.500h4.500V20H7z" fill="#00a4ef" /><path d="M12.500 15.500H17V20h-4.500z" fill="#ffb900" /></>,
  <><path d="M3 6L14 0 24 6V22H3Z" fill="#1478cf" /><path d="M8 22L24 9V22Z" fill="#44c3f2" /><path d="M14 4L24 10 14 17Z" fill="#0f4f9e" /><path d="M0 4H14V19H0Z" fill="#0a62c4" /><circle cx="7" cy="11.500" r="3.500" fill="none" stroke="#fff" strokeWidth="2" /></>,
  <><path d="M1 23L3 17A11 11 0 1 1 7 21.500Z" fill="none" stroke="#25d366" strokeWidth="2.500" /><path d="M7 6Q9 5 10 9L9 11Q11 14 14 15L16 14Q19 15 18 17Q15 20 10 15Q5 11 7 6" fill="#25d366" /><circle cx="24" cy="19" r="8" fill="#3d3534" stroke="#aaa" /><T x={24} y={19} size={12} weight={600} c="#fff" a="middle">1</T></>,
  <><rect width="24" height="24" rx="2" fill="#225478" /><path d="M4 18C5 12 2 6 4 4C8 2 13 6 15 11C16 15 18 16 21 20M4 18L6 14 8 16M16 3L18 6H21M17 14L18 20" stroke="#d9e6ef" fill="none" strokeWidth="1.200" /></>,
  <><path d="M11 0H19V24H11Z" fill="#d99405" /><path d="M6 6H14V24H6Z" fill="#f1bd2b" /><path d="M1 12H9V24H1Z" fill="#fbdf69" /></>,
];

function Taskbar() {
  return (
    <div className="flex h-[40px] shrink-0 items-stretch bg-[linear-gradient(90deg,#222b48_0,#222b48_48px,#30261f_336px,#302723_480px,#4a2733_580px,#442630_690px,#322627_790px,#342728_900px,#3b2d2d_1000px,#444039_1130px,#3a2a2c_1200px,#3d1c29_1280px,#3a1727_100%)] text-[13.500px] whitespace-nowrap text-white">
      <svg className="ml-[16px] mt-[12px] h-[16px] w-[16px] shrink-0" viewBox="0 0 16 16" fill="#fff"><path d="M0 2.300L7 1.300V7.500H0ZM8 1.200L16 0V7.500H8ZM0 8.500H7V14.700L0 13.700ZM8 8.500H16V16L8 14.800Z" /></svg>
      <div className="ml-[16px] flex w-[288px] shrink-0 items-center border border-[#c0c0c0] bg-[#f1f1f1] pl-[11px] text-[14.500px] tracking-[-0.260px] text-[#333]">
        <svg className="mr-[11px] h-[17px] w-[17px]" viewBox="0 0 17 17" fill="none" stroke="#333" strokeWidth="1.300"><circle cx="10.500" cy="6" r="5" /><path d="M7 9.500L.5 16.500" /></svg>
        <span className="w-[176px] pt-[2px]">Type here to search</span>
        <svg className="h-[26px] w-[62px]" viewBox="0 0 62 26"><path d="M24 0Q27 9 36 12Q27 15 24 24Q21 15 12 12Q21 9 24 0" fill="#fbc52d" stroke="#fbc52d" strokeLinejoin="round" /><path d="M46 10Q47 14 52 15.500Q47 17 46 21Q45 17 41 15.500Q45 14 46 10" fill="#f8b62d" /><path d="M4 16L6 19 9 20 6 22 5 25 3 22 0 21 3 19Z" fill="#25a0ea" /><circle cx="40" cy="2" r="2" fill="#f06a35" /><circle cx="58.500" cy="22" r="2" fill="#85c440" /></svg>
      </div>
      <svg className="ml-[16px] mt-[12px] h-[16px] w-[16px] shrink-0" viewBox="0 0 16 16" fill="none" stroke="#fff" strokeWidth="1.200"><path d="M.7 0V3H10.500V0M.7 6H10.500V11H.7ZM.7 16V13.500H10.500V16M14.500 0V4M14.500 10V16" /><path d="M13 5H16V8H13Z" fill="#fff" stroke="none" /></svg>
      <svg className="h-0 w-0" aria-hidden><defs><linearGradient id="cpA" x1="0" y1="0" x2="0" y2="1"><stop stopColor="#1579e0" /><stop offset=".55" stopColor="#28b9a0" /><stop offset="1" stopColor="#f3cf2d" /></linearGradient><linearGradient id="cpB" x1="0" y1="0" x2="0" y2="1"><stop stopColor="#a54de0" /><stop offset=".5" stopColor="#f0578f" /><stop offset="1" stopColor="#ffb05a" /></linearGradient><linearGradient id="edA" x1="0" y1="1" x2="1" y2="0"><stop stopColor="#1057b5" /><stop offset=".5" stopColor="#1c9fdf" /><stop offset="1" stopColor="#5fe083" /></linearGradient></defs></svg>
      <div className="ml-[18px] flex shrink-0">
        {appIcons.map((ic, i) => (
          <div key={i} className={`flex h-full flex-col items-center ${i === 7 ? "ml-px w-[48px] bg-[#5b5151]" : "w-[49px]"}`}>
            <svg className="mt-[8px] h-[24px] w-[24px] shrink-0 overflow-visible" viewBox="0 0 24 24">{ic}</svg>
            <div className={i === 3 || i === 4 ? "hidden" : i === 7 ? "mt-auto h-[2px] w-[48px] bg-[#76b9ed]" : "mt-auto h-[2px] w-[40px] bg-[#76b9ed]"} />
          </div>
        ))}
      </div>
      <svg className="ml-[165px] mt-[8px] h-[24px] w-[26px] shrink-0" viewBox="0 0 26 24"><path d="M13 4A9 9 0 1 1 2 16Q13 18 13 4" fill="#f3a22d" /><path d="M2 9A3 3 0 0 1 3 4Q5-1 9 2Q13 3 12 9Z" fill="#b9d1f7" /><path d="M12 21A3 3 0 0 1 14 15Q18 11 21 15Q26 17 24 21Z" fill="#c5dafa" /><circle cx="18" cy="5.500" r="6" fill="#d32e2e" /><T x={18} y={6} size={8} c="#fff" a="middle">1</T></svg>
      <div className="ml-[6px] flex w-[142px] shrink-0 items-center tracking-[-0.160px]"><span className="w-[38px]">29°C</span><span>Partly cloudy</span></div>
      <div className="flex items-center"><Chev className="ml-px w-[11px] rotate-180" />
        <svg className="ml-[10px] h-[16px] w-[18px]" viewBox="0 0 18 16"><path d="M2 11A3 3 0 0 1 3 6Q6 1 10 4Q14 4 14 11Z" fill="#c9c9c9" /><circle cx="12" cy="11" r="4.500" fill="#2ea7e8" /><path d="M12 10V13.500M12 8V9" stroke="#fff" strokeWidth="1.300" /></svg>
        <svg className="ml-[6px] h-[14px] w-[17px]" viewBox="0 0 17 14" fill="none" stroke="#fff" strokeWidth="1.200"><path d="M5 1.500H16.300V10H4V6M10 10V13M6.500 13H13.500M.7 .7H4V5H.7Z" /></svg>
        <svg className="ml-[6px] h-[14px] w-[17px]" viewBox="0 0 17 14" fill="none" stroke="#fff" strokeWidth="1.100"><path d="M.7 5H3L7 1.500V12.500L3 9H.7ZM9 5Q10 7 9 9M11 3.500Q13 7 11 10.500" /><path d="M13.500 2Q16.500 7 13.500 12" stroke="#aaa" /></svg>
        <span className="ml-[10px] w-[32px] text-[12px] tracking-[-0.500px]">ENG</span>
        <div className="flex w-[66px] flex-col items-center text-[12px] leading-[18px] tracking-[-0.450px]"><span>20:50</span><span>05-03-2025</span></div>
        <svg className="ml-[14px] h-[16px] w-[17px]" viewBox="0 0 17 16" fill="none" stroke="#fff" strokeWidth="1.200"><path d="M.7 .7H16.300V12.500H11L8.500 15 6 12.500H.7Z" /></svg>
      </div>
      <div className="ml-[20px] w-px bg-[#8a7580]" />
    </div>
  );
}

export default function App() {
  return (
    <div className={`flex h-[768px] w-[1366px] flex-col overflow-hidden bg-[#f4f4f4] ${SANS}`}>
      <TitleBar /><Menu /><Ribbon />
      <div className="flex h-[593px] shrink-0">
        <Rail />
        <div className="flex w-[963px] shrink-0 flex-col">
          <div className="flex h-[558px]"><ReportCanvas /><Filters /></div>
          <PageTabs />
        </div>
        <Visualizations /><DataPane />
      </div>
      <div className="flex h-[24px] shrink-0 items-center border-t border-[#c8c8c8] pl-[4px] pr-[19px] text-[12px] tracking-[-0.200px] text-[#424242]">
        <span className="pt-[2px]">Page 1 of 1</span>
        <svg className="ml-auto h-[12px] w-[122px]" viewBox="0 0 122 12" fill="none" stroke="#333" strokeWidth="1.200"><path d="M0 6.500H4" strokeWidth="2" /><path d="M8 6.500H108M58.500 4V9M114.500 6.500H122M118.200 3V10" /><path d="M36 1V12" strokeWidth="4" /></svg>
        <span className="ml-[13px] w-[43px] text-[#6b6055]">60%</span>
        <svg className="h-[10px] w-[14px]" viewBox="0 0 14 10" fill="none" stroke="#444"><rect x=".5" y=".5" width="13" height="9" rx="1" /><path d="M5 2.500H2.500V7.500H5M9 2.500H11.500V7.500H9" /></svg>
      </div>
      <div className="h-px shrink-0 bg-black" />
      <Taskbar />
    </div>
  );
}
